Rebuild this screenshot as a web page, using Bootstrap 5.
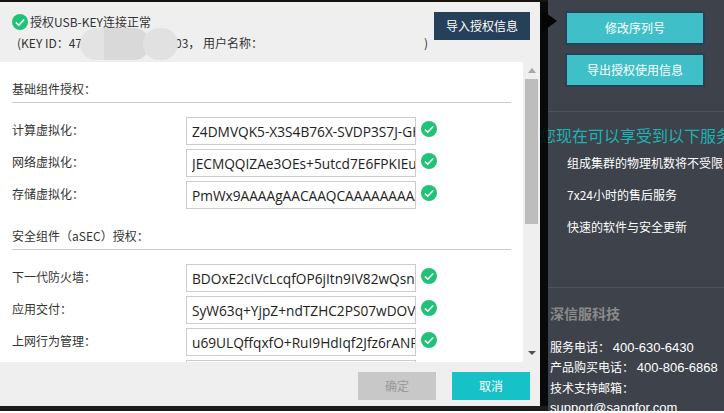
<!doctype html>
<html lang="zh"><head><meta charset="utf-8">
<link href="https://cdn.jsdelivr.net/npm/bootstrap@5.3.0/dist/css/bootstrap.min.css" rel="stylesheet">
<style>
body{margin:0;background:#fff;font-family:"Noto Sans CJK SC","Noto Sans",sans-serif;font-size:12px;color:#333;overflow:hidden}
.stage{width:724px;height:411px;background:#3d424b;overflow:hidden;position:relative}
.leftcol{width:548px;height:411px;flex:none;position:relative;z-index:2}
.topline{height:2px;background:#16120c}
.midrow{height:404px}
.dlg{width:540px;height:404px;background:#efefef;flex:none}
.blackbar{width:8px;background:rgba(0,0,0,.86);flex:none;position:relative}
.arrowtip{position:absolute;left:2px;top:8px;width:0;height:0;border-top:11px solid transparent;border-bottom:11px solid transparent;border-left:15px solid #050505;z-index:3}
.darkbottom{height:5px;background:#1b1b1b}
.sidepane{width:176px;flex:none;color:#fff}
.sidebtn{width:140px;height:34px;margin-left:17px;background:#3fc0c8;border:2px solid #254058;color:#fff;font-size:12px;line-height:30px;padding:0;border-radius:0;display:block}
.sidebtn:hover{background:#3fc0c8;color:#fff;border-color:#254058}
.sb1{margin-top:11px}
.sb2{margin-top:8px}
.rulea{height:1px;background:#4d5260;margin-top:24px}
.ruleb{height:1px;background:#4d5260;margin-top:51px}
.sidehead{margin:12px 0 8px -8px;font-size:16px;line-height:22px;color:#1fb2b4;white-space:nowrap}
.svc{margin:0 0 14px -8px;line-height:18px;white-space:nowrap;height:18px}
.svc svg{margin-right:18px;flex:none}
.corp{margin:15px 0 0 2px;font-size:14px;font-weight:700;color:#8a8a8a;line-height:20px}
.contact{margin:14px 0 0 2px;line-height:19.3px;white-space:nowrap}
.num{font-family:"Liberation Sans",sans-serif;font-size:13px}
.dlghead{height:60px;flex:none;padding:10px 10px 0 12px;position:relative}
.okline{line-height:18px;margin-top:1px;gap:2px}
.keyline{margin:3px 0 0 5px;line-height:18px;white-space:nowrap}
.keya{display:inline-block;width:158px}
.keyb{display:inline-block;width:249px}
.smear1,.smear2{position:absolute;top:26px;height:32px;border-radius:16px;filter:blur(.6px)}
.smear1{left:80px;width:70px;background:linear-gradient(90deg,#e3e3e3 0 35%,#d9d9d9 35% 100%)}
.smear2{left:143px;width:35px;background:#e1e1e1}
.importbtn{width:96px;height:28px;background:#254058;color:#fff;line-height:28px;text-align:center;flex:none;padding:0;border:0;border-radius:0;font-size:12px}
.importbtn:hover{background:#254058;color:#fff}
.dlgbody{height:300px;flex:none}
.scrollarea{width:523px;background:#fff;padding:0 12px;overflow:hidden;flex:none}
.rail{flex:1}
.railup,.raildn{display:block;width:0;height:0;border-left:4px solid transparent;border-right:4px solid transparent}
.railup{border-bottom:5px solid #a6a6a6;margin-top:6px}
.thumb{width:13px;height:145px;background:#bdbdbd;margin-top:6px}
.raildn{border-top:4px solid #505050;margin-top:auto;margin-bottom:7px}
.sect{line-height:18px;padding:18px 0 4px;border-bottom:1px solid #cbcbcb;width:499px;margin-bottom:14px}
.sect2{padding-top:14px}
.rowx{height:28px;margin-bottom:4px}
.lab{width:174px;flex:none;line-height:18px;margin-top:-3px}
.keyinp{width:230px;height:28px;border:1px solid #ccc;background:#fff;padding:0 0 0 5px;font-family:"Open Sans","Noto Sans",sans-serif;font-size:13.7px;flex:none;color:#222;border-radius:0;outline:0;display:block}
.tick{flex:none;margin-left:5px;margin-top:-4px}
.dlgfoot{height:44px;flex:none;gap:16px;padding:10px 10px 0 0}
.fbtn{width:78px;height:28px;line-height:28px;text-align:center;font-size:12px;padding:0;border:0;border-radius:0}
.fbtn.off,.fbtn.off:disabled{background:#c8c8c8;color:#999;opacity:1}
.fbtn.on,.fbtn.on:hover{background:#17c1c8;color:#fff}
</style></head><body>
<div class="stage d-flex">
 <div class="leftcol">
  <div class="topline"></div>
  <div class="midrow d-flex">
   <div class="dlg d-flex flex-column">
    <div class="dlghead d-flex justify-content-between">
     <div>
      <div class="okline d-flex align-items-center"><svg width="16" height="16" viewBox="0 0 16 16"><circle cx="8" cy="8" r="8" fill="#20c277"/><path d="M3.8 8.4l3 2.8 5.4-5.8" fill="none" stroke="#fff" stroke-width="1.5"/></svg>授权USB-KEY连接正常</div>
      <div class="keyline"><span class="keya">(KEY ID：47</span><span class="keyb">03， 用户名称：</span><span>)</span></div>
     </div>
     <button type="button" class="btn importbtn">导入授权信息</button>
     <div class="smear1"></div><div class="smear2"></div>
    </div>
    <div class="dlgbody d-flex">
     <div class="scrollarea">
      <div class="sect">基础组件授权：</div>
      <div class="rowx d-flex align-items-center"><div class="lab">计算虚拟化：</div><input class="keyinp" readonly value="Z4DMVQK5-X3S4B76X-SVDP3S7J-GHK2"><svg class="tick" width="16" height="16" viewBox="0 0 16 16"><circle cx="8" cy="8" r="8" fill="#20c277"/><path d="M3.8 8.4l3 2.8 5.4-5.8" fill="none" stroke="#fff" stroke-width="1.5"/></svg></div>
      <div class="rowx d-flex align-items-center"><div class="lab">网络虚拟化：</div><input class="keyinp" readonly value="JECMQQIZAe3OEs+5utcd7E6FPKIEuxy"><svg class="tick" width="16" height="16" viewBox="0 0 16 16"><circle cx="8" cy="8" r="8" fill="#20c277"/><path d="M3.8 8.4l3 2.8 5.4-5.8" fill="none" stroke="#fff" stroke-width="1.5"/></svg></div>
      <div class="rowx d-flex align-items-center"><div class="lab">存储虚拟化：</div><input class="keyinp" readonly value="PmWx9AAAAgAACAAQCAAAAAAAAAAAAA"><svg class="tick" width="16" height="16" viewBox="0 0 16 16"><circle cx="8" cy="8" r="8" fill="#20c277"/><path d="M3.8 8.4l3 2.8 5.4-5.8" fill="none" stroke="#fff" stroke-width="1.5"/></svg></div>
      <div class="sect sect2">安全组件（aSEC）授权：</div>
      <div class="rowx d-flex align-items-center"><div class="lab">下一代防火墙：</div><input class="keyinp" readonly value="BDOxE2cIVcLcqfOP6jItn9IV82wQsnkw"><svg class="tick" width="16" height="16" viewBox="0 0 16 16"><circle cx="8" cy="8" r="8" fill="#20c277"/><path d="M3.8 8.4l3 2.8 5.4-5.8" fill="none" stroke="#fff" stroke-width="1.5"/></svg></div>
      <div class="rowx d-flex align-items-center"><div class="lab">应用交付：</div><input class="keyinp" readonly value="SyW63q+YjpZ+ndTZHC2PS07wDOVwq"><svg class="tick" width="16" height="16" viewBox="0 0 16 16"><circle cx="8" cy="8" r="8" fill="#20c277"/><path d="M3.8 8.4l3 2.8 5.4-5.8" fill="none" stroke="#fff" stroke-width="1.5"/></svg></div>
      <div class="rowx d-flex align-items-center"><div class="lab">上网行为管理：</div><input class="keyinp" readonly value="u69ULQffqxfO+RuI9HdIqf2Jfz6rANPq"><svg class="tick" width="16" height="16" viewBox="0 0 16 16"><circle cx="8" cy="8" r="8" fill="#20c277"/><path d="M3.8 8.4l3 2.8 5.4-5.8" fill="none" stroke="#fff" stroke-width="1.5"/></svg></div>
      <div class="rowx d-flex align-items-center"><div class="lab"></div><input class="keyinp" readonly value=""></div>
     </div>
     <div class="rail d-flex flex-column align-items-center"><span class="railup"></span><div class="thumb"></div><span class="raildn"></span></div>
    </div>
    <div class="dlgfoot d-flex justify-content-end"><button type="button" class="btn fbtn off" disabled>确定</button><button type="button" class="btn fbtn on">取消</button></div>
   </div>
   <div class="blackbar"><div class="arrowtip"></div></div>
  </div>
  <div class="darkbottom"></div>
 </div>
 <div class="sidepane">
  <button type="button" class="btn sidebtn sb1">修改序列号</button>
  <button type="button" class="btn sidebtn sb2">导出授权使用信息</button>
  <div class="rulea"></div>
  <div class="sidehead">您现在可以享受到以下服务</div>
  <div class="svc d-flex align-items-center"><svg width="9" height="14" viewBox="0 0 9 14"><path d="M0 10l9-8" stroke="#14602a" fill="none"/></svg>组成集群的物理机数将不受限</div>
  <div class="svc d-flex align-items-center"><svg width="9" height="14" viewBox="0 0 9 14"><path d="M0 10l9-8" stroke="#14602a" fill="none"/></svg>7x24小时的售后服务</div>
  <div class="svc d-flex align-items-center"><svg width="9" height="14" viewBox="0 0 9 14"><path d="M0 10l9-8" stroke="#14602a" fill="none"/></svg>快速的软件与安全更新</div>
  <div class="ruleb"></div>
  <div class="corp">深信服科技</div>
  <div class="contact">服务电话： <span class="num">400-630-6430</span><br>产品购买电话： <span class="num">400-806-6868</span><br>技术支持邮箱：<br><span class="num">support@sangfor.com</span></div>
 </div>
</div>
<script src="https://cdn.jsdelivr.net/npm/bootstrap@5.3.0/dist/js/bootstrap.bundle.min.js"></script>
</body></html>
